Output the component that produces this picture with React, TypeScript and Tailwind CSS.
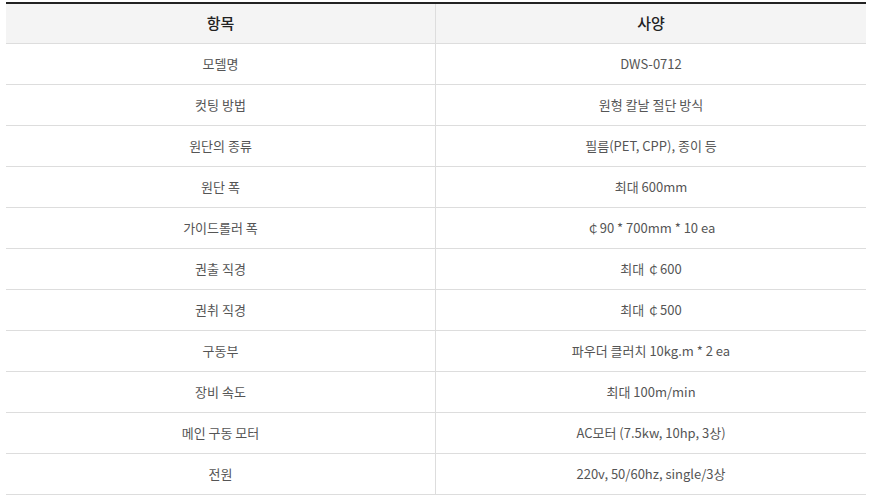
import React from 'react';

const ROWS: [string, string][] = [
  ['모델명', 'DWS-0712'],
  ['컷팅 방법', '원형 칼날 절단 방식'],
  ['원단의 종류', '필름(PET, CPP), 종이 등'],
  ['원단 폭', '최대 600mm'],
  ['가이드롤러 폭', '￠90 * 700mm * 10 ea'],
  ['권출 직경', '최대 ￠600'],
  ['권취 직경', '최대 ￠500'],
  ['구동부', '파우더 클러치 10kg.m * 2 ea'],
  ['장비 속도', '최대 100m/min'],
  ['메인 구동 모터', 'AC모터 (7.5kw, 10hp, 3상)'],
  ['전원', '220v, 50/60hz, single/3상'],
];

const App: React.FC = () => {
  return (
    <div
      className="w-[870px] h-[497px] bg-white pt-[2px] px-[6px]"
      style={{ fontFamily: '"Noto Sans CJK KR", "Noto Sans", sans-serif' }}
    >
      <div className="w-[860px] border-t-2 border-[#222]">
        <div className="flex h-[40px] bg-[#f4f4f4] border-b border-[#ddd] text-[15px] font-medium text-[#222]">
          <div className="w-[429px] flex items-center justify-center">항목</div>
          <div className="flex-1 flex items-center justify-center border-l border-[#ddd]">사양</div>
        </div>
        {ROWS.map(([k, v]) => (
          <div key={k} className="flex h-[41px] border-b border-[#ddd] text-[13px] text-[#555]">
            <div className="w-[429px] flex items-center justify-center">{k}</div>
            <div className="flex-1 flex items-center justify-center border-l border-[#ddd]">{v}</div>
          </div>
        ))}
      </div>
    </div>
  );
};

export default App;
